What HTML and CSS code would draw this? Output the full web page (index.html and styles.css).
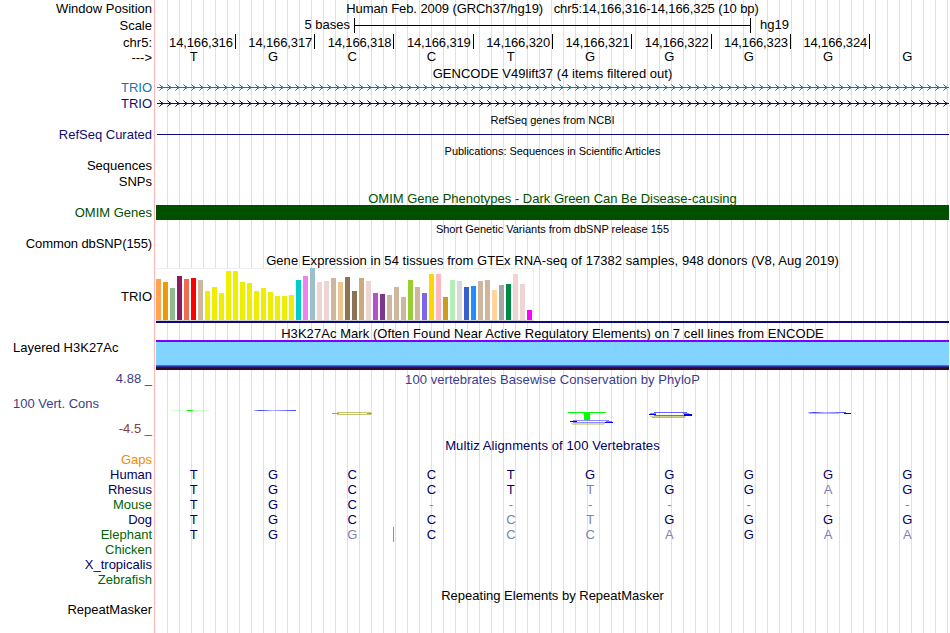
FILE: index.html
```html
<!DOCTYPE html>
<html lang="en">
<head>
<meta charset="UTF-8">
<meta name="viewport" content="width=device-width, initial-scale=1.0">
<title>chr5:14,166,316-14,166,325</title>
<link rel="stylesheet" href="styles.css">
</head>
<body>
<div class="browser">
    <div class="row h16 low"><div class="label">Window Position</div><div class="track title t-window">Human Feb. 2009 (GRCh37/hg19) &nbsp; chr5:14,166,316-14,166,325 (10 bp)</div></div>
    <div class="row h18 low"><div class="label">Scale</div>
        <div class="track scale"><span class="scale-text">5 bases</span><span class="scale-bar"></span><span>hg19</span></div>
    </div>
    <div class="row h15 low"><div class="label">chr5:</div><div class="track cells ruler" id="ruler"></div></div>
    <div class="row h16 low"><div class="label arrow-label">---&gt;</div><div class="track cells bases" data-seq="TGCCTGGGGG"></div></div>

    <div class="row h15 low"><div class="label"></div><div class="track title t-gencode">GENCODE V49lift37 (4 items filtered out)</div></div>
    <div class="row h16 trio-blue"><div class="label">TRIO</div>
        <div class="track">
            <svg class="gene" width="793" height="16">
                <defs><pattern id="chevron-blue" width="8" height="16" patternUnits="userSpaceOnUse" x="2">
                    <path d="M2 5h1v1h-1zM3 6h1v1h-1zM3 8h1v1h-1zM2 9h1v1h-1z"/>
                    <path opacity=".6" d="M1 4h1v1h-1zM4 6h1v1h-1zM4 8h1v1h-1zM1 10h1v1h-1z"/>
                </pattern></defs>
                <rect x="1" y="7" width="792" height="1"/>
                <rect x="1" width="792" height="16" fill="url(#chevron-blue)"/>
            </svg>
        </div>
    </div>
    <div class="row h16 trio-navy"><div class="label">TRIO</div>
        <div class="track">
            <svg class="gene" width="793" height="16">
                <defs><pattern id="chevron-navy" width="8" height="16" patternUnits="userSpaceOnUse" x="2">
                    <path d="M2 5h1v1h-1zM3 6h1v1h-1zM3 8h1v1h-1zM2 9h1v1h-1z"/>
                    <path opacity=".6" d="M1 4h1v1h-1zM4 6h1v1h-1zM4 8h1v1h-1zM1 10h1v1h-1z"/>
                </pattern></defs>
                <rect x="1" y="7" width="792" height="1"/>
                <rect x="1" width="792" height="16" fill="url(#chevron-navy)"/>
            </svg>
        </div>
    </div>

    <div class="row h15"><div class="label"></div><div class="track title small">RefSeq genes from NCBI</div></div>
    <div class="row h16 refseq"><div class="label">RefSeq Curated</div><div class="track"><div class="refseq-line"></div></div></div>

    <div class="row h15"><div class="label"></div><div class="track title small t-pubs">Publications: Sequences in Scientific Articles</div></div>
    <div class="row h16"><div class="label">Sequences</div><div class="track"></div></div>
    <div class="row h16"><div class="label">SNPs</div><div class="track"></div></div>

    <div class="row h15 low omim"><div class="label"></div><div class="track title">OMIM Gene Phenotypes - Dark Green Can Be Disease-causing</div></div>
    <div class="row h15 omim"><div class="label">OMIM Genes</div><div class="track omim-bar"></div></div>

    <div class="row h16 low"><div class="label"></div><div class="track title small">Short Genetic Variants from dbSNP release 155</div></div>
    <div class="row h16"><div class="label dbsnp">Common dbSNP(155)</div><div class="track"></div></div>

    <div class="row h16 low"><div class="label"></div><div class="track title t-wide">Gene Expression in 54 tissues from GTEx RNA-seq of 17382 samples, 948 donors (V8, Aug 2019)</div></div>
    <div class="row h55"><div class="label gtex-label">TRIO</div>
        <div class="track gtex"><div class="gtex-graph" id="gtex"></div></div>
    </div>

    <div class="row h17"><div class="label"></div><div class="track title t-wide">H3K27Ac Mark (Often Found Near Active Regulatory Elements) on 7 cell lines from ENCODE</div></div>
    <div class="row h30"><div class="label left">Layered H3K27Ac</div><div class="track h3k-bar"></div></div>

    <div class="row h18 cons"><div class="label">4.88 _</div><div class="track title phylop">100 vertebrates Basewise Conservation by PhyloP</div></div>
    <div class="row h50 cons">
        <div class="label cons-label"><span class="cons-name">100 Vert. Cons</span><span class="cons-min">-4.5 _</span></div>
        <div class="track">
            <svg class="logo" width="793" height="50" fill="none">
                <defs>
                    <linearGradient id="thin" x1="0" x2="1"><stop offset="0" stop-color="#00f" stop-opacity=".3"/><stop offset=".15" stop-color="#00f" stop-opacity=".75"/><stop offset=".45" stop-color="#00f" stop-opacity=".3"/><stop offset="1" stop-color="#00f" stop-opacity=".75"/></linearGradient>
                </defs>
                <rect x="15" y="22" width="38" height="1" fill="#0f0" opacity=".17"/>
                <rect x="31" y="22" width="6" height="1" fill="#0f0"/>
                <rect x="98" y="22" width="42" height="1" fill="url(#thin)"/>
                <path d="M215 24.5H181M181 26.5H215" stroke="#990" stroke-opacity=".55"/>
                <path d="M176 25.5h7M211 25.5h5" stroke="#990" stroke-opacity=".8"/>
                <rect x="412" y="24" width="38" height="1" fill="#0f0"/>
                <rect x="428" y="24" width="6" height="8" fill="#0f0"/>
                <path d="M453 32.5H417M417 34.5H453" stroke="#00f" stroke-opacity=".45"/>
                <path d="M414 33.5h7M449 34.5h8" stroke="#00f"/>
                <path d="M450 33.5h6" stroke="#00f" stroke-opacity=".5"/>
                <path d="M415 35.5h34M416 36.5h32" stroke="#990" stroke-opacity=".35"/>
                <path d="M531 24.5H498M498 27.5H528" stroke="#00f" stroke-opacity=".6"/>
                <path d="M494 25.5h6M527 25.5h6" stroke="#00f" stroke-opacity=".5"/>
                <path d="M493 26.5h7M528 26.5h8M528 27.5h8" stroke="#00f"/>
                <path d="M494 28.5h36" stroke="#990" stroke-opacity=".45"/>
                <path d="M496 29.5h33" stroke="#e00" stroke-opacity=".4"/>
                <rect x="652" y="24" width="38" height="1" fill="url(#thin)"/>
                <path d="M653 25.5h30" stroke="#00f" stroke-opacity=".3"/>
                <path d="M688 25.5h7" stroke="#00f"/>
            </svg>
        </div>
    </div>

    <div class="row h14 navy"><div class="label"></div><div class="track title t-multiz">Multiz Alignments of 100 Vertebrates</div></div>
    <div class="row h15 gaps"><div class="label">Gaps</div><div class="track"></div></div>
    <div class="row h15 navy"><div class="label">Human</div><div class="track cells" data-seq="TGCCTGGGGG"></div></div>
    <div class="row h15 navy"><div class="label">Rhesus</div><div class="track cells" data-seq="TGCCTtGGaG"></div></div>
    <div class="row h15 green"><div class="label">Mouse</div><div class="track cells" data-seq="TGC-------"></div></div>
    <div class="row h15 navy"><div class="label">Dog</div><div class="track cells" data-seq="TGCCctGGGG"></div></div>
    <div class="row h15 green"><div class="label">Elephant</div><div class="track cells" data-seq="TGg|CccaGaa"></div></div>
    <div class="row h15 green"><div class="label">Chicken</div><div class="track"></div></div>
    <div class="row h15 navy"><div class="label">X_tropicalis</div><div class="track"></div></div>
    <div class="row h15 green"><div class="label">Zebrafish</div><div class="track"></div></div>

    <div class="row h15 low"><div class="label"></div><div class="track title">Repeating Elements by RepeatMasker</div></div>
    <div class="row h15"><div class="label">RepeatMasker</div><div class="track"></div></div>
    <div class="row rest"><div class="label"></div><div class="track"></div></div>
</div>

<script src="tracks.js"></script>
</body>
</html>
```

FILE: styles.css
```css
body {
    margin: 0;
    background-color: #fff;
    font-family: "Liberation Sans", Arial, Helvetica, sans-serif;
    font-size: 13px;
    color: #000;
}
.browser {
    display: flex;
    flex-direction: column;
    width: 949px;
    height: 633px;
    overflow: hidden;
}
.row {
    display: flex;
    flex: none;
    line-height: 16px;
    white-space: nowrap;
}
.label {
    box-sizing: border-box;
    width: 155px;
    padding-right: 2px;
    margin-right: 1px;
    border-right: 1px solid #ffb4b4;
    text-align: right;
}
.track {
    width: 793px;
    /* vertical guide lines */
    background-image: repeating-linear-gradient(to right, transparent 0 11px, #dcdcff 11px 12px);
}
.title {
    text-align: center;
}
.small {
    font-size: 11px;
}
.left {
    text-align: left;
    padding-left: 13px;
}

/* row heights */
.h14 { height: 14px; }
.h15 { height: 15px; }
.h16 { height: 16px; }
.h17 { height: 17px; line-height: 22px; }
.h18 { height: 18px; line-height: 18px; }
.h30 { height: 30px; }
.h50 { height: 50px; }
.h55 { height: 55px; }
.rest { flex: 1; }

/* text sits one pixel lower */
.low { line-height: 18px; }
.h18.low { line-height: 20px; }

/* title widths */
.t-window { letter-spacing: -0.09px; }
.t-gencode { letter-spacing: 0.03px; }
.t-pubs { letter-spacing: -0.04px; }
.t-wide, .phylop { letter-spacing: 0.06px; }
.t-multiz { letter-spacing: 0.1px; }
.phylop { line-height: 20px; }
.dbsnp { letter-spacing: -0.1px; }

/* scale */
.scale {
    display: flex;
    align-items: center;
    line-height: 16px;
}
.scale-text {
    width: 194px;
    margin-right: 4px;
    text-align: right;
}
.scale-bar {
    width: 395px;
    height: 15px;
    margin-right: 9px;
    border-left: 1px solid #000;
    border-right: 1px solid #000;
    background: linear-gradient(#000, #000) 0 7px / 100% 1px no-repeat;
}

/* one column per base */
.cells {
    display: flex;
}
.cell {
    box-sizing: border-box;
    flex: none;
    width: 79.3px;
    padding-right: 3px;
    text-align: center;
    line-height: 16px;
}
.cells .cell:first-child {
    margin-left: -0.5px;
}
.ruler .cell {
    padding-right: 2px;
    text-align: right;
    letter-spacing: -0.13px;
    line-height: 18px;
}
.ruler .cell + .cell {
    border-left: 1px solid #000;
}
.mismatch {
    color: #8080b4;
}
.insert {
    padding-right: 4px;
    border-left: 1px solid #e08600;
}

/* genes */
.gene, .logo {
    display: block;
    shape-rendering: crispEdges;
}
.gene {
    fill: currentColor;
}
.trio-blue { color: #0c78b4; }
.trio-navy { color: #0c0c78; }
.refseq { color: #0c0c78; }
.refseq-line {
    height: 1px;
    margin: 7px 0 0 1px;
    background-color: #0c0c78;
}
.omim { color: #005000; }
.omim-bar {
    background: #005000;
}

/* expression */
.gtex-label {
    padding-top: 21px;
}
.gtex {
    box-sizing: border-box;
    border-bottom: 2px solid #0c0c78;
}
.gtex-graph {
    display: flex;
    align-items: flex-end;
    gap: 2px;
    box-sizing: border-box;
    width: 378px;
    height: 53px;
    background: linear-gradient(#eee, #eee) 0 0 / 100% 1px no-repeat #fff;
    border-right: 1px solid #eee;
    border-bottom: 1px solid #cdcdcd;
}
.bar {
    width: 5px;
}

.h3k-bar {
    background: linear-gradient(#7f00ff 0 2px, #80d4ff 2px 25px, #6060cc 25px 26px, #3030a8 26px 27px, #1a1460 27px 28px, #320a28 28px 30px);
}

/* conservation */
.cons { color: #3c3c8c; }
.cons-label {
    display: flex;
    flex-direction: column;
    justify-content: space-between;
    padding: 8px 2px 1px 13px;
}
.cons-name {
    text-align: left;
}
.cons-min {
    color: #8c3c3c;
}
.navy, .green .cells { color: #000064; }
.green { color: #006400; }
.gaps { color: #f08c00; }
```

FILE: tracks.js
```js
// ruler ticks
var ruler = document.getElementById('ruler');
for (var pos = 316; pos <= 325; pos++) {
    var tick = document.createElement('span');
    tick.className = 'cell';
    tick.textContent = pos < 325 ? '14,166,' + pos : '';
    ruler.appendChild(tick);
}

// bases: lower case = mismatch, "-" = gap, "|" = insertion before the next base
document.querySelectorAll('[data-seq]').forEach(function(track) {
    var insert = false;
    track.dataset.seq.split('').forEach(function(base) {
        if (base === '|') {
            insert = true;
            return;
        }
        var cell = document.createElement('span');
        cell.className = 'cell';
        if (base === '-' || base !== base.toUpperCase()) {
            cell.classList.add('mismatch');
        }
        if (insert) {
            cell.classList.add('insert');
        }
        insert = false;
        cell.textContent = base.toUpperCase();
        track.appendChild(cell);
    });
});

// expression level and colour of each tissue
var tissues = [
    [41, '#ffa54f'], [38, '#ee9a00'], [32, '#8fbc8f'], [44, '#8b1c62'], [41, '#ee6a50'], [42, '#ff0000'],
    [40, '#cdb79e'], [29, '#eeee00'], [33, '#eeee00'], [27, '#eeee00'], [49, '#eeee00'], [49, '#eeee00'],
    [38, '#eeee00'], [37, '#eeee00'], [29, '#eeee00'], [32, '#eeee00'], [28, '#eeee00'], [24, '#eeee00'],
    [24, '#eeee00'], [25, '#eeee00'], [40, '#00cdcd'], [44, '#ee82ee'], [52, '#9ac0cd'], [38, '#eed5d2'],
    [39, '#eed5d2'], [42, '#cdb79e'], [38, '#eec591'], [43, '#8b7355'], [29, '#8b7355'], [42, '#cdaa7d'],
    [39, '#eed5d2'], [27, '#b452cd'], [26, '#7a378b'], [25, '#cdb79e'], [33, '#cdb79e'], [23, '#cdb79e'],
    [40, '#9acd32'], [33, '#cdb79e'], [27, '#7a67ee'], [46, '#ffd700'], [46, '#ffb6c1'], [23, '#cd9b1d'],
    [40, '#b4eeb4'], [39, '#d9d9d9'], [33, '#3a5fcd'], [34, '#1e90ff'], [39, '#cdb79e'], [40, '#cdb79e'],
    [30, '#ffd39b'], [35, '#a6a6a6'], [36, '#008b45'], [46, '#eed5d2'], [36, '#eed5d2'], [10, '#ff00ff']
];
var graph = document.getElementById('gtex');
tissues.forEach(function(t) {
    var bar = document.createElement('span');
    bar.className = 'bar';
    bar.style.height = t[0] + 'px';
    bar.style.backgroundColor = t[1];
    graph.appendChild(bar);
});
```
